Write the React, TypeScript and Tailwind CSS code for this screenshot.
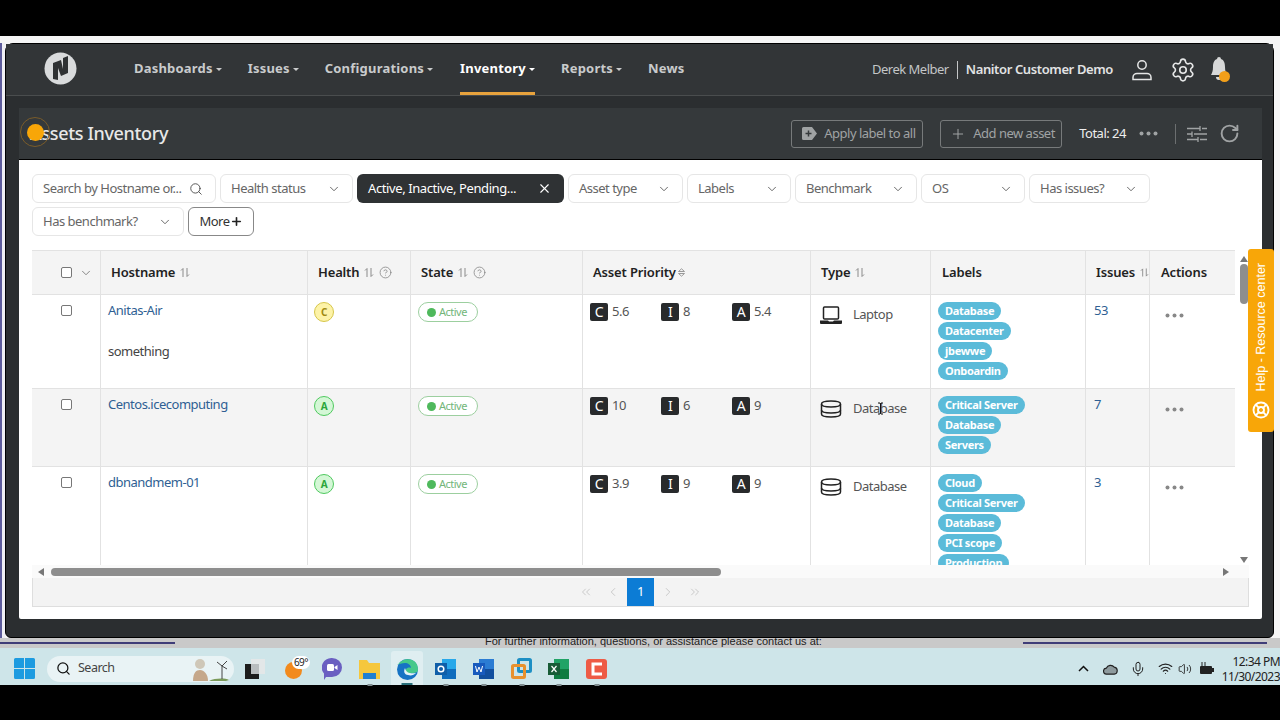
import type { ReactNode } from "react";
import { ChevronDown, ChevronLeft, ChevronRight, ChevronsLeft, ChevronsRight, CircleHelp, LifeBuoy, Mic, Plus, RotateCw, Search, Settings, Volume2, Wifi, X } from "lucide-react";

const navItems = [
  { name: "Dashboards", caret: true, className: "ml-[57px]" },
  { name: "Issues", caret: true, className: "ml-[26px]" },
  { name: "Configurations", caret: true, className: "ml-[26px]" },
  { name: "Inventory", caret: true, active: true, className: "ml-[27px]" },
  { name: "Reports", caret: true, className: "ml-[26px]" },
  { name: "News", caret: false, className: "ml-[26px]" },
];

const rows = [
  {
    host: "Anitas-Air",
    note: "something",
    health: "C",
    c: "5.6",
    i: "8",
    a: "5.4",
    type: "Laptop",
    labels: ["Database", "Datacenter", "jbewwe", "Onboardin"],
    issues: "53",
    className: "h-[94px] bg-white",
  },
  {
    host: "Centos.icecomputing",
    note: "",
    health: "A",
    c: "10",
    i: "6",
    a: "9",
    type: "Database",
    labels: ["Critical Server", "Database", "Servers"],
    issues: "7",
    className: "h-[78px] bg-[#f4f4f4]",
  },
  {
    host: "dbnandmem-01",
    note: "",
    health: "A",
    c: "3.9",
    i: "9",
    a: "9",
    type: "Database",
    labels: ["Cloud", "Critical Server", "Database", "PCI scope", "Production"],
    issues: "3",
    className: "h-[110px] bg-white",
  },
];

const gridCols = "grid grid-cols-[69px_207px_103px_172px_228px_120px_155px_64px_85px]";

function Caret() {
  return <span className="ml-[3px] inline-block h-0 w-0 border-x-[3px] border-t-[3px] border-x-transparent border-t-current align-middle" />;
}

function SortIcon() {
  return (
    <svg width="10" height="11" viewBox="0 0 10 11" fill="none" stroke="#8a8a8a" strokeWidth="1" className="ml-[5px]">
      <path d="M3 10V1.500M3 1.500 1 3.500M7 1v8.500M7 9.500l2-2" />
    </svg>
  );
}

function Filter({ label, className }: { label: string; className: string }) {
  return (
    <div className={`flex h-[29px] items-center justify-between rounded-md border border-[#e6e6e6] bg-white pl-[10px] pr-[11px] text-[#666] ${className}`}>
      <span>{label}</span>
      <ChevronDown size={14} strokeWidth={1.500} className="text-[#555]" />
    </div>
  );
}

function Score({ letter, value, className }: { letter: string; value: string; className: string }) {
  return (
    <div className={`flex items-center ${className}`}>
      <span className="flex h-[18px] w-[18px] items-center justify-center rounded-[2px] bg-[#282a2c] text-[14px] text-white">{letter}</span>
      <span className="ml-[4px] text-[#555]">{value}</span>
    </div>
  );
}

function Health({ grade }: { grade: string }) {
  const tone = grade === "C" ? "border-[#d6c64a] bg-[#fdf3a8] text-[#a08a10]" : "border-[#4fc95f] bg-[#d4f7d6] text-[#2aa63a]";
  return <span className={`flex h-5 w-5 items-center justify-center rounded-full border text-[10px] font-bold ${tone}`}>{grade}</span>;
}

function LaptopIcon() {
  return (
    <svg width="22" height="18" viewBox="0 0 22 18" className="shrink-0">
      <rect x="3.500" y="1" width="15" height="12" rx="1" fill="none" stroke="#222" strokeWidth="1.500" />
      <path d="M0 14.500h8l1 1h4l1-1h8V17a1 1 0 0 1-1 1H1a1 1 0 0 1-1-1z" fill="#222" />
    </svg>
  );
}

function DatabaseIcon() {
  return (
    <svg width="22" height="18" viewBox="0 0 22 18" fill="none" stroke="#222" strokeWidth="1.500" className="shrink-0">
      <path d="M1.500 4c0-2 4-3 9.500-3s9.500 1 9.500 3v10c0 2-4 3-9.500 3s-9.500-1-9.500-3z" />
      <path d="M1.500 4c0 2 4 3 9.500 3s9.500-1 9.500-3M1.500 10c0 2 4 3 9.500 3s9.500-1 9.500-3" />
    </svg>
  );
}

function Row({ row }: { row: (typeof rows)[number] }) {
  const cell = "border-r border-[#e2e2e2]";
  return (
    <div className={`${gridCols} shrink-0 border-b border-[#e2e2e2] ${row.className}`}>
      <div className={`${cell} pl-[29px] pt-[10px]`}>
        <span className="block h-[11px] w-[11px] rounded-[2px] border border-[#777] bg-white" />
      </div>
      <div className={`${cell} pl-[7px] pt-[6px]`}>
        <div className="text-[#2f5f93]">{row.host}</div>
        {row.note && <div className="mt-[21px] text-[#444]">{row.note}</div>}
      </div>
      <div className={`${cell} pl-[6px] pt-[7px]`}>
        <Health grade={row.health} />
      </div>
      <div className={`${cell} pl-[7px] pt-[7px]`}>
        <div className="flex h-5 w-[60px] items-center rounded-full border border-[#9ccf9f] bg-white pl-[8px] text-[11px] text-[#73b67a]">
          <span className="mr-[3px] h-[9px] w-[9px] rounded-full bg-[#4fb95c]" />
          Active
        </div>
      </div>
      <div className={`${cell} flex items-start pl-[7px] pt-[7px]`}>
        <Score letter="C" value={row.c} className="w-[71px]" />
        <Score letter="I" value={row.i} className="w-[71px]" />
        <Score letter="A" value={row.a} className="" />
      </div>
      <div className={`${cell} flex items-start pl-[9px] pt-[11px] text-[#555]`}>
        {row.type === "Laptop" ? <LaptopIcon /> : <DatabaseIcon />}
        <span className="ml-[11px] -mt-[1px]">{row.type}</span>
      </div>
      <div className={`${cell} flex flex-col items-start gap-[2px] overflow-hidden pl-[7px] pt-[7px]`}>
        {row.labels.map((label) => (
          <span key={label} className="flex h-[18px] shrink-0 items-center rounded-full bg-[#5bbbd9] px-[7px] text-[11px] font-bold tracking-[-0.3px] text-white">
            {label}
          </span>
        ))}
      </div>
      <div className={`${cell} pl-[8px] pt-[6px] text-[#2f5f93]`}>{row.issues}</div>
      <div className="pl-[15px] pt-[18px]">
        <Dots className="block fill-[#888]" />
      </div>
    </div>
  );
}

function Dots({ className }: { className: string }) {
  return (
    <svg width="19" height="5" viewBox="0 0 19 5" className={className}>
      <circle cx="2.500" cy="2.500" r="2" />
      <circle cx="9.500" cy="2.500" r="2" />
      <circle cx="16.500" cy="2.500" r="2" />
    </svg>
  );
}

function HeaderCell({ label, sort, help, className }: { label: string; sort?: boolean; help?: boolean; className: string }) {
  return (
    <div className={`flex items-center border-r border-[#e2e2e2] font-semibold tracking-[-0.15px] text-[#222] ${className}`}>
      {label}
      {sort && <SortIcon />}
      {help && <CircleHelp size={13} strokeWidth={1.500} className="ml-[5px] text-[#888]" />}
    </div>
  );
}

function Logo() {
  return (
    <svg width="33" height="33" viewBox="0 0 33 33" className="-mt-[3px]">
      <circle cx="16.500" cy="16.500" r="16" fill="#d9dbdc" />
      <path d="M9 27V11l8-3 2 9V6l5-2v17l-7 3-3-8v12z" fill="#2e3133" />
    </svg>
  );
}

function TaskIcon({ className, children }: { className: string; children: ReactNode }) {
  return (
    <div className={`relative flex h-[20px] w-[21px] shrink-0 items-center justify-center ${className}`}>
      {children}
      <span className="absolute left-1/2 top-[25px] h-[2px] w-[5px] -translate-x-1/2 bg-[#7f8c8f]" />
    </div>
  );
}

function Taskbar() {
  return (
    <div className="flex h-[37px] shrink-0 items-center bg-[#cee5e9] pl-[14px] pt-[4px]">
      <svg width="21" height="21" viewBox="0 0 21 21" className="shrink-0">
        <path d="M0 1.500Q0 0 1.500 0H10v10H0zM11 0h8.500Q21 0 21 1.500V10H11zM0 11h10v10H1.500Q0 21 0 19.500zM11 11h10v8.500Q21 21 19.500 21H11z" fill="#1d9be0" />
      </svg>
      <div className="ml-[12px] flex h-[26px] w-[187px] shrink-0 items-center rounded-full bg-[#e9f3f5] pl-[9px] pr-[3px] text-[12.500px] text-[#444]">
        <Search size={15} strokeWidth={2} className="text-[#111]" />
        <span className="ml-[7px]">Search</span>
        <svg width="40" height="24" viewBox="0 0 40 24" className="ml-auto">
          <circle cx="9" cy="7" r="5" fill="#cfc7b8" />
          <path d="M2 24c0-8 3-11 7-11s8 4 8 11z" fill="#c5a78a" />
          <path d="M18 24c6-3 16-3 20-1l-3 1z" fill="#7a9a5a" />
          <path d="M31 22V8M31 9l5-5M31 9l-5-4M31 9l5 3" stroke="#444" strokeWidth="1" fill="none" />
        </svg>
      </div>
      <svg width="20" height="20" viewBox="0 0 20 20" className="ml-[11px] shrink-0">
        <rect x="6" y="0" width="14" height="15" fill="#e3e7e8" />
        <rect x="0" y="5" width="14" height="15" fill="#1c1c1c" />
        <rect x="6" y="5" width="8" height="10" fill="#b9bdbf" />
      </svg>
      <div className="relative ml-[20px] h-[20px] w-[18px] shrink-0">
        <span className="absolute bottom-0 left-0 h-[17px] w-[17px] rounded-full bg-[#f28a1d]" />
        <span className="absolute -right-[7px] -top-[3px] flex h-[13px] w-[18px] items-center justify-center rounded-full bg-white text-[10px] text-[#222]">69°</span>
      </div>
      <svg width="20" height="22" viewBox="0 0 20 22" className="ml-[19px] shrink-0">
        <path d="M10 0a10 9.500 0 0 1 0 19H4l-2 3v-6.500A10 9.500 0 0 1 10 0z" fill="#6a5fc1" />
        <rect x="5" y="6" width="7" height="7" rx="1.500" fill="#fff" />
        <path d="m12.500 9 3-2v5l-3-2z" fill="#fff" />
      </svg>
      <TaskIcon className="ml-[17px]">
        <svg width="21" height="20" viewBox="0 0 21 20">
          <path d="M0 1h8l2 3h11v16H0z" fill="#f5c73d" />
          <rect x="4" y="14" width="13" height="6" fill="#1f7fd1" />
        </svg>
      </TaskIcon>
      <div className="relative ml-[11px] flex h-[34px] w-[32px] shrink-0 items-center justify-center self-end rounded-t-[3px] bg-[#dfeef1] pt-[3px]">
        <svg width="21" height="21" viewBox="0 0 21 21">
          <circle cx="10.500" cy="10.500" r="10.500" fill="#1773c4" />
          <path d="M1 6C4 0 12-1 17 2c3 2 4 5 4 9 0 2-2 3-5 3h-5c-2 0-3-2-2-4 1-1 3-2 5-1 0-3-3-5-6-5-3 0-6 1-8 2z" fill="#46c98b" />
          <path d="M11 16c-3 0-5-3-3-7 1 5 6 6 11 5-2 2-5 3-8 2z" fill="#e6f4f6" />
        </svg>
        <span className="absolute bottom-0 left-1/2 h-[2px] w-[11px] -translate-x-1/2 bg-[#2a6f7a]" />
      </div>
      <TaskIcon className="ml-[12px]">
        <svg width="21" height="20" viewBox="0 0 21 20">
          <rect x="7" y="0" width="14" height="20" fill="#28a8ea" />
          <rect x="7" y="10" width="14" height="10" fill="#0f6cbd" />
          <rect x="0" y="4" width="12" height="12" fill="#0f5ea8" />
          <circle cx="6" cy="10" r="2.800" fill="none" stroke="#fff" strokeWidth="1.500" />
        </svg>
      </TaskIcon>
      <TaskIcon className="ml-[17px]">
        <svg width="21" height="20" viewBox="0 0 21 20">
          <rect x="6" y="0" width="15" height="20" fill="#2b7cd3" />
          <rect x="6" y="10" width="15" height="10" fill="#124f9e" />
          <rect x="0" y="4" width="12" height="12" fill="#185abd" />
          <path d="m2.500 7 1.500 6 2-5 2 5 1.500-6" fill="none" stroke="#fff" strokeWidth="1" />
        </svg>
      </TaskIcon>
      <TaskIcon className="ml-[17px]">
        <svg width="21" height="21" viewBox="0 0 21 21" fill="none" strokeWidth="3">
          <rect x="7.500" y="1.500" width="12" height="12" rx="1" stroke="#1d8fc4" />
          <rect x="1.500" y="7.500" width="12" height="12" rx="1" stroke="#e8912d" />
        </svg>
      </TaskIcon>
      <TaskIcon className="ml-[16px]">
        <svg width="21" height="20" viewBox="0 0 21 20">
          <rect x="6" y="0" width="15" height="20" fill="#21a366" />
          <rect x="6" y="10" width="15" height="10" fill="#107c41" />
          <rect x="0" y="4" width="12" height="12" fill="#185c37" />
          <path d="m3.500 7 5 6M8.500 7l-5 6" stroke="#fff" strokeWidth="1.200" />
        </svg>
      </TaskIcon>
      <TaskIcon className="ml-[17px]">
        <svg width="21" height="20" viewBox="0 0 21 20">
          <rect width="21" height="20" rx="3" fill="#ee5b45" />
          <path d="M16 5H7v10h9" stroke="#fff" strokeWidth="3" fill="none" />
        </svg>
      </TaskIcon>
      <svg width="11" height="7" viewBox="0 0 11 7" className="ml-[471px] shrink-0" fill="none" stroke="#111" strokeWidth="1.500">
        <path d="m1 6 4.500-4.500L10 6" />
      </svg>
      <svg width="15" height="12" viewBox="0 0 16 12" className="ml-[14px] shrink-0">
        <path d="M4 11.500a3.200 3.200 0 0 1-.5-6.400A5 5 0 0 1 12 4a3.800 3.800 0 0 1 0 7.500z" fill="#8e9a9d" stroke="#222" strokeWidth="1.200" />
      </svg>
      <Mic size={16} strokeWidth={1.500} className="ml-[12px] shrink-0 text-[#222]" />
      <Wifi size={15} strokeWidth={1.800} className="ml-[12px] shrink-0 text-[#222]" />
      <Volume2 size={14} strokeWidth={1.500} className="ml-[5px] shrink-0 text-[#222]" />
      <svg width="15" height="13" viewBox="0 0 15 13" className="ml-[7px] shrink-0">
        <rect x="1" y="4" width="12" height="8" rx="1" fill="#222" />
        <rect x="13" y="6" width="2" height="4" fill="#222" />
        <path d="M3 0v4M6 0v4" stroke="#222" strokeWidth="1" />
      </svg>
      <div className="ml-auto text-right text-[12px] leading-[15px] tracking-[-0.55px] text-[#222]">
        <div>12:34 PM</div>
        <div>11/30/2023</div>
      </div>
    </div>
  );
}

export default function App() {
  return (
    <div className="relative flex h-[720px] w-[1280px] flex-col overflow-hidden bg-black font-['Noto_Sans','Open_Sans',sans-serif] text-[13px] tracking-[-0.5px]">
      <div className="h-[36px] shrink-0 bg-black" />
      <div className="h-[7px] shrink-0 bg-[#f5f5f5]" />
      <div className="relative z-10 flex h-[595px] shrink-0 bg-[#f5f5f5]">
        <div className="w-[5px] shrink-0 border-l-2 border-[#5e5c9c] bg-[#f0f0f5]" />
        <div className="flex w-[1269px] flex-col rounded-t-lg rounded-b-md border border-black bg-[#2b2e30]">
          <header className="flex h-[52px] shrink-0 items-center border-b border-[#4a4d4e] bg-[#323537] pl-[38px] pr-[44px]">
            <Logo />
            {navItems.map((item) => (
              <div
                key={item.name}
                className={`flex h-full items-center border-b-[3px] pt-[2px] font-bold tracking-[0.2px] ${item.className} ${
                  item.active ? "border-[#e8a33d] text-white" : "border-transparent text-[#c9cbcc]"
                }`}
              >
                {item.name}
                {item.caret && <Caret />}
              </div>
            ))}
            <div className="ml-auto flex items-center text-[#c4c6c7]">
              Derek Melber
              <span className="mx-[8px] h-[18px] w-px bg-[#c4c6c7]" />
              <span className="font-semibold tracking-[-0.38px] text-[#e2e3e4]">Nanitor Customer Demo</span>
            </div>
            <svg width="22" height="22" viewBox="0 0 22 22" fill="none" stroke="#e5e6e6" strokeWidth="1.500" className="ml-[18px]">
              <circle cx="11" cy="6" r="4.200" />
              <path d="M2 20.500v-2c0-2.500 2-4 4-4h10c2 0 4 1.500 4 4v2z" />
            </svg>
            <Settings size={26} strokeWidth={1.500} className="ml-[17px] text-[#e5e6e6]" />
            <div className="relative ml-[13px] h-[25px] w-[20px]">
              <svg width="20" height="24" viewBox="0 0 20 24" fill="#d7d8d8">
                <path d="M10 0a2 2 0 0 1 2 2c3 1 4 4 4 8 0 4 1 6 2 8H2c1-2 2-4 2-8 0-4 1-7 4-8a2 2 0 0 1 2-2zM7 20h6a3 3 0 0 1-6 0z" />
              </svg>
              <span className="absolute bottom-0 right-[-1px] h-[11px] w-[11px] rounded-full bg-[#f29f1a]" />
            </div>
          </header>

          <div className="flex min-h-0 flex-1 flex-col pb-[18px] pl-[13px] pr-[11px] pt-[12px]">
            <div className="flex h-[52px] shrink-0 items-center border-b border-black bg-[#35393b] pl-[11px] text-white">
              <span className="text-[18px] font-medium tracking-[-0.35px] text-[#e8e8e8]">Assets Inventory</span>
              <div className="ml-auto flex h-[28px] w-[132px] items-center whitespace-nowrap rounded-[3px] border border-[#777a7b] pl-[10px] text-[#a0a3a4]">
                <svg width="15" height="13" viewBox="0 0 15 13" className="mr-[7px] shrink-0">
                  <path d="M1.500 0H10l5 6.500L10 13H1.500A1.500 1.500 0 0 1 0 11.500v-10A1.500 1.500 0 0 1 1.500 0z" fill="#a0a3a4" />
                  <path d="M6.500 3.500v6M3.500 6.500h6" stroke="#35393b" strokeWidth="1.500" />
                </svg>
                Apply label to all
              </div>
              <div className="ml-[17px] flex h-[28px] w-[122px] items-center whitespace-nowrap rounded-[3px] border border-[#777a7b] pl-[9px] text-[#a0a3a4]">
                <Plus size={16} strokeWidth={1.500} className="mr-[7px] shrink-0" />
                Add new asset
              </div>
              <span className="ml-[17px] whitespace-nowrap text-[#eee]">Total: 24</span>
              <Dots className="ml-[13px] fill-[#a0a3a4]" />
              <span className="ml-[17px] h-[20px] w-px bg-[#6c6f70]" />
              <svg width="20" height="18" viewBox="0 0 20 18" fill="none" stroke="#a0a3a4" strokeWidth="1.300" className="ml-[11px]">
                <path d="M0 3.500h13M13 1v5M15 3.500h5M0 9h5M5 6.500V12M7 9h13M0 14.500h11M11 12v5M13 14.500h7" />
              </svg>
              <RotateCw size={21} strokeWidth={2.200} className="ml-[12px] mr-[22px] text-[#a0a3a4]" />
            </div>

            <div className="min-h-0 flex-1 rounded-b-[2px] bg-white pl-[13px] pr-[13px] pt-[14px]">
              <div className="flex h-[62px] flex-wrap content-start gap-x-[4px] gap-y-[4px]">
                <div className="flex h-[29px] w-[184px] items-center justify-between whitespace-nowrap rounded-md border border-[#e6e6e6] pl-[10px] pr-[12px] text-[#666]">
                  <span>Search by Hostname or...</span>
                  <Search size={14} strokeWidth={1.500} className="shrink-0 text-[#444]" />
                </div>
                <Filter label="Health status" className="w-[133px]" />
                <div className="flex h-[29px] w-[207px] items-center justify-between rounded-md bg-[#2f3234] pl-[11px] pr-[12px] tracking-[-0.4px] text-white">
                  <span>Active, Inactive, Pending...</span>
                  <X size={15} strokeWidth={1.800} />
                </div>
                <Filter label="Asset type" className="w-[115px]" />
                <Filter label="Labels" className="w-[104px]" />
                <Filter label="Benchmark" className="w-[122px]" />
                <Filter label="OS" className="w-[104px]" />
                <Filter label="Has issues?" className="w-[121px]" />
                <Filter label="Has benchmark?" className="w-[152px]" />
                <div className="flex h-[29px] w-[66px] items-center justify-center rounded-md border border-[#888] text-[#333]">
                  More
                  <Plus size={13} strokeWidth={3} className="text-[#222]" />
                </div>
              </div>

              <div className="mt-[14px] w-[1217px]">
                <div className="flex h-[317px]">
                  <div className="flex w-[1203px] flex-col overflow-hidden">
                    <div className={`${gridCols} h-[45px] shrink-0 border-y border-[#e2e2e2] bg-[#f4f4f4]`}>
                      <div className="flex items-center gap-[7px] border-r border-[#e2e2e2] pl-[29px]">
                        <span className="h-[11px] w-[11px] rounded-[2px] border border-[#777] bg-white" />
                        <ChevronDown size={14} strokeWidth={1.500} className="text-[#777]" />
                      </div>
                      <HeaderCell label="Hostname" sort className="pl-[10px]" />
                      <HeaderCell label="Health" sort help className="pl-[10px]" />
                      <HeaderCell label="State" sort help className="pl-[10px]" />
                      <div className="flex items-center border-r border-[#e2e2e2] pl-[10px] font-semibold tracking-[-0.15px] text-[#222]">
                        Asset Priority
                        <svg width="7" height="9" viewBox="0 0 7 9" fill="none" stroke="#999" className="ml-[2px]">
                          <path d="M.500 3.500 3.500.800l3 2.700zM.500 5.500l3 2.700 3-2.700z" />
                        </svg>
                      </div>
                      <HeaderCell label="Type" sort className="pl-[10px]" />
                      <HeaderCell label="Labels" className="pl-[11px]" />
                      <HeaderCell label="Issues" sort className="pl-[10px]" />
                      <HeaderCell label="Actions" className="border-r-0 pl-[11px]" />
                    </div>
                    {rows.map((row) => (
                      <Row key={row.host} row={row} />
                    ))}
                  </div>
                  <div className="ml-[4px] flex w-[10px] flex-col items-center pt-[6px]">
                    <span className="h-0 w-0 border-x-[4px] border-b-[6px] border-x-transparent border-b-[#777]" />
                    <span className="mt-[2px] h-[40px] w-[8px] rounded-full bg-[#8e8e8e]" />
                    <span className="mb-[4px] mt-auto h-0 w-0 border-x-[4px] border-t-[6px] border-x-transparent border-t-[#777]" />
                  </div>
                </div>
                <div className="relative -mt-[2px] flex h-[13px] items-center bg-[#fafafa] pl-[6px] pr-[20px]">
                  <span className="h-0 w-0 border-y-[4px] border-r-[6px] border-y-transparent border-r-[#777]" />
                  <span className="ml-[7px] h-[8px] w-[670px] rounded-full bg-[#8e8e8e]" />
                  <span className="ml-auto h-0 w-0 border-y-[4px] border-l-[6px] border-y-transparent border-l-[#777]" />
                </div>
                <div className="flex h-[29px] items-center justify-center border-x border-b border-[#dedede] bg-[#f3f3f3] text-[#bbb]">
                  <ChevronsLeft size={14} strokeWidth={1.300} />
                  <ChevronLeft size={14} strokeWidth={1.300} className="ml-[13px]" />
                  <span className="ml-[7px] flex h-[28px] w-[27px] items-center justify-center bg-[#0c7cd5] text-white">1</span>
                  <ChevronRight size={14} strokeWidth={1.300} className="ml-[7px]" />
                  <ChevronsRight size={14} strokeWidth={1.300} className="ml-[13px]" />
                </div>
              </div>
            </div>
          </div>
        </div>
        <div className="w-[6px] shrink-0 bg-[#f5f5f5]" />
      </div>
      <div className="relative flex h-[10px] shrink-0 items-start bg-[#c9c9c9] pt-[4px]">
        <span className="h-[2px] w-[175px] bg-[#3f3d78]" />
        <span className="-mt-[7px] ml-[310px] whitespace-nowrap font-['Liberation_Sans',sans-serif] text-[11px] leading-[13px] tracking-normal text-[#222]">For further information, questions, or assistance please contact us at:</span>
        <span className="ml-auto mr-[13px] h-[2px] w-[244px] bg-[#3f3d78]" />
      </div>
      <Taskbar />

      <div className="absolute left-[1248px] top-[249px] z-20 flex h-[183px] w-[26px] flex-col items-center justify-between rounded-[3px] bg-[#f8a608] pb-[13px] pt-[14px] text-white">
        <span className="rotate-180 font-['Liberation_Sans',sans-serif] text-[12.500px] tracking-normal [writing-mode:vertical-rl]">Help - Resource center</span>
        <LifeBuoy size={18} strokeWidth={2.500} />
      </div>
      <span className="absolute left-[20px] top-[117px] z-20 h-[30px] w-[30px] rounded-full border border-[#7a5c2a]" />
      <span className="absolute left-[27px] top-[124px] z-20 h-[17px] w-[17px] rounded-full bg-[#f8a608]" />
      <svg width="7" height="13" viewBox="0 0 7 13" fill="none" stroke="#111" strokeWidth="1" className="absolute left-[877px] top-[402px] z-20">
        <path d="M1 1h2l.500 1 .500-1h2M3.500 2v9M1 12h2l.500-1 .500 1h2" />
      </svg>
    </div>
  );
}
